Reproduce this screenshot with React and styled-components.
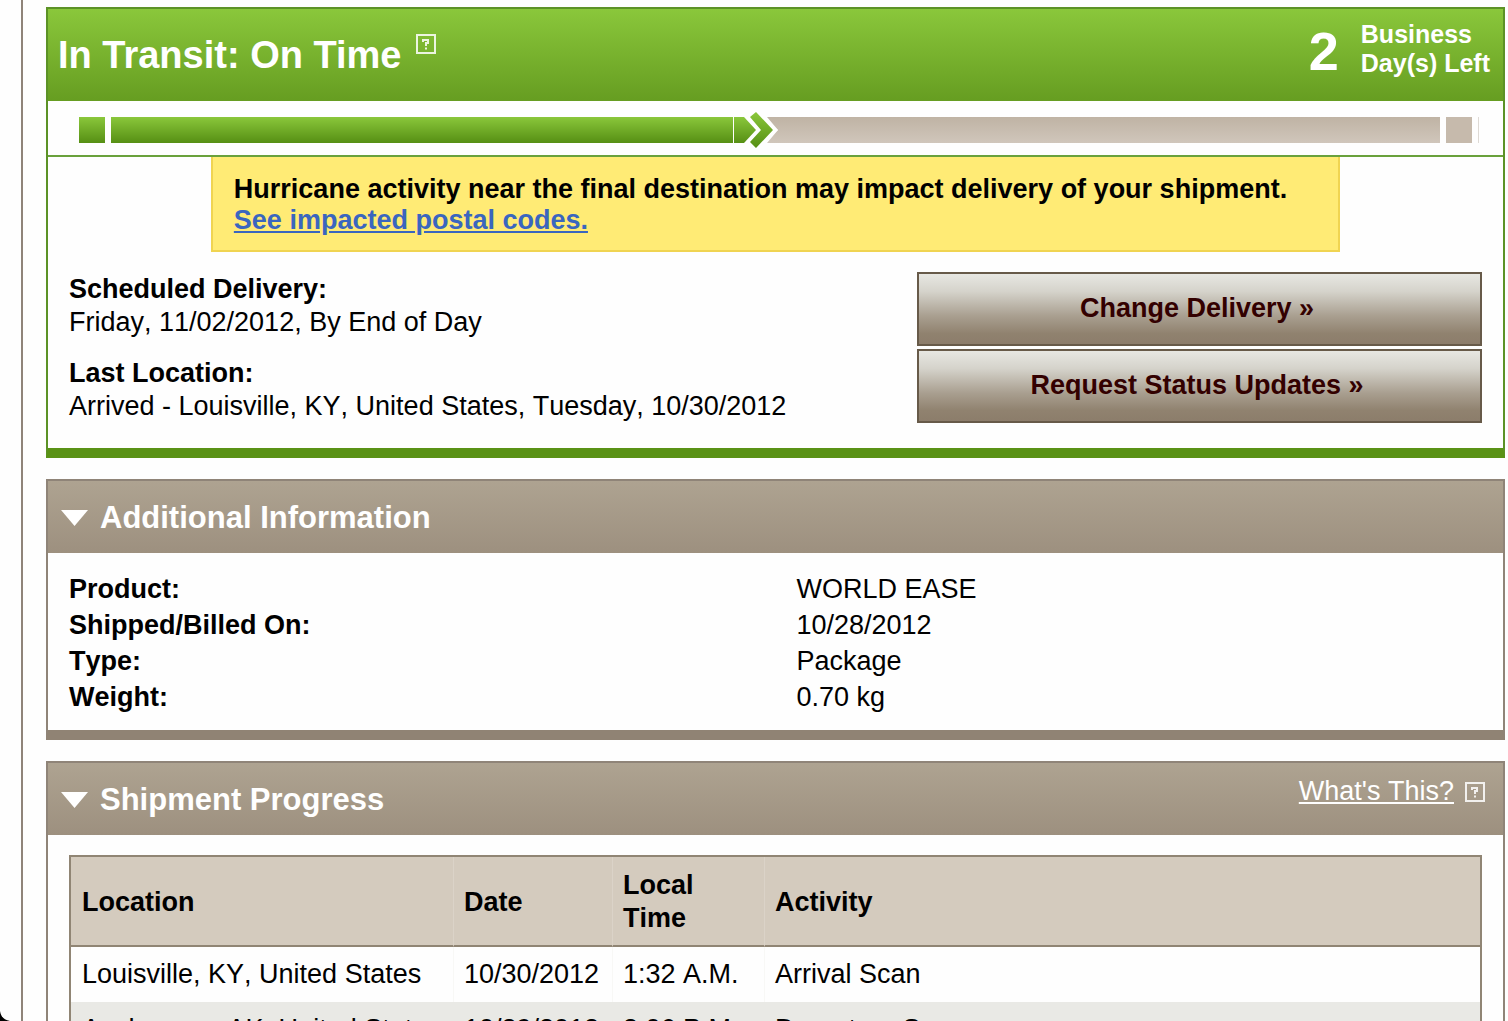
import React from "react";
import styled, { createGlobalStyle } from "styled-components";

const GlobalStyle = createGlobalStyle`
  *, *::before, *::after { box-sizing: border-box; }
  body {
    margin: 0;
    background: #fefefe;
    color: #000;
    font-family: "Liberation Sans", Arial, sans-serif;
    font-size: 27px;
    font-kerning: none;
    line-height: 33px;
  }
`;

const Page = styled.div`
  position: relative;
  height: 100vh;
  overflow: hidden;
  padding-left: 21px;
`;

const Content = styled.main`
  display: flex;
  flex-direction: column;
  gap: 21px;
  min-height: 100%;
  padding: 7px 3px 0 23px;
  border-left: 2px solid #8f8479;
`;

const WindowCorner = styled.svg`
  position: absolute;
  left: 0;
  bottom: 0;
`;

const Panel = styled.section`
  border: 2px solid ${(p) => (p.$tone === "green" ? "#5c9226" : "#8f8478")};
  border-bottom: 10px solid ${(p) => (p.$tone === "green" ? "#5a9216" : "#908374")};
`;

const StatusHeader = styled.header`
  display: flex;
  justify-content: space-between;
  height: 92px;
  padding: 11px 13px 0 10px;
  color: #fff;
  background: linear-gradient(#8ac73b, #669d21);
`;

const StatusTitle = styled.h1`
  display: flex;
  gap: 15px;
  margin: 0;
  font-size: 38px;
  font-kerning: normal;
  line-height: 70px;
`;

const HelpButton = styled.button`
  display: flex;
  align-self: flex-start;
  margin-top: ${(p) => p.$drop}px;
  padding: 0;
  border: 0;
  background: none;
`;

const DaysLeft = styled.div`
  display: flex;
  gap: 22px;
  font-size: 25px;
  font-weight: bold;
  line-height: 29px;
`;

const DayCount = styled.span`
  font-size: 54px;
  line-height: 62px;
`;

const Track = styled.div`
  display: flex;
  align-items: center;
  gap: 6px;
  height: 56px;
  padding: 4px 24px 0 31px;
  border-bottom: 2px solid #69a13c;
`;

const Stop = styled.span`
  width: 26px;
  height: 26px;
  background: ${(p) => (p.$done ? "linear-gradient(#8ac73b, #568f14)" : "#c6baac")};
`;

const EndTick = styled.span`
  width: 1px;
  height: 26px;
  background: #dedad5;
`;

const Bar = styled.div`
  display: flex;
  align-items: center;
  flex: 1;
`;

const Done = styled.span`
  height: 26px;
  background: linear-gradient(#8ac73b, #568f14);
`;

const Remaining = styled.span`
  flex: 1;
  height: 26px;
  background: linear-gradient(#bfb3a4, #d0c6bb);
`;

const Alert = styled.div`
  width: fit-content;
  margin: 0 auto;
  padding: 17px 51px 14px 21px;
  border: 2px solid #f0d451;
  border-top: 0;
  background: #ffeb75;
  font-weight: bold;
  line-height: 31px;

  p { margin: 0; }
  a { color: #3a66bf; }
`;

const StatusBody = styled.div`
  display: flex;
  justify-content: space-between;
  gap: 20px;
  padding: 20px 21px 25px;
`;

const Facts = styled.dl`
  margin: 0;
  padding-top: 1px;

  dt { font-weight: bold; }
  dd { margin: 0 0 18px; }
  dd:last-child { margin: 0; }
`;

const Actions = styled.div`
  display: flex;
  flex-direction: column;
  gap: 3px;
  width: 565px;
`;

const ActionButton = styled.button`
  height: 74px;
  padding: 0 5px 2px 0;
  border: 2px solid #675a49;
  background: linear-gradient(#e7e7e2, #d5d3cb 25%, #a99f90 60%, #90826f 85%, #8c7d6b);
  color: #300;
  font: bold 27px/33px "Liberation Sans", Arial, sans-serif;
  font-kerning: none;
`;

const SectionHeader = styled.header`
  display: flex;
  justify-content: space-between;
  height: 72px;
  padding: 0 18px 0 12px;
  color: #fff;
  background: linear-gradient(#aea391, #9d907f);
`;

const SectionTitle = styled.h2`
  margin: 0;
  font-size: 31px;
  line-height: 74px;
`;

const Toggle = styled.button`
  display: flex;
  align-items: center;
  gap: 11px;
  padding: 0;
  border: 0;
  background: none;
  color: inherit;
  font: inherit;
`;

const HeaderAside = styled.div`
  display: flex;
  gap: 11px;
  padding-top: 12px;

  a { color: #fff; }
`;

const Details = styled.dl`
  display: grid;
  grid-template-columns: 1fr 1fr;
  margin: 0;
  padding: 18px 0 15px;
  line-height: 36px;

  dt, dd { margin: 0; padding-left: 21px; }
  dt { font-weight: bold; }
`;

const TableWrap = styled.div`
  padding: 20px 21px;
`;

const ScanTable = styled.table`
  width: 100%;
  table-layout: fixed;
  border: 2px solid #908574;
  border-spacing: 0;

  th, td { text-align: left; vertical-align: middle; }
  th { padding: 12px 10px 10px; border-bottom: 2px solid #908574; background: #d4cbbe; }
  td { height: 55px; padding: 11px 10px; }
  th:first-child, td:first-child { padding-left: 11px; }
  th:not(:last-child) { border-right: 1px solid #dbd3c8; }
  td:not(:last-child) { border-right: 1px solid #f8f8f6; }
  tr:nth-child(even) td { border-color: #e9e9e5; background: #e9e9e5; }
`;

const Col = styled.col`
  width: ${(p) => p.$width};
`;

function HelpIcon() {
  return (
    <svg width="20" height="20" viewBox="0 0 20 20" fill="none" stroke="#fff" strokeOpacity="0.85" strokeWidth="2" aria-hidden="true">
      <rect x="1" y="1" width="18" height="18" />
      <path d="M6.500 6H12V9H10V12M10 13.500v2M7 5v3" />
    </svg>
  );
}

function Arrow() {
  return (
    <svg width="47" height="38" viewBox="0 0 47 38" aria-hidden="true">
      <defs>
        <linearGradient id="grass" x1="0" y1="0" x2="0" y2="1">
          <stop offset="0" stopColor="#8ac73b" />
          <stop offset="1" stopColor="#568f14" />
        </linearGradient>
        <linearGradient id="sand" x1="0" y1="0" x2="0" y2="1">
          <stop offset="0" stopColor="#bfb3a4" />
          <stop offset="1" stopColor="#d0c6bb" />
        </linearGradient>
      </defs>
      <path d="M34 6h13v26H34L45 19z" fill="url(#sand)" />
      <path d="M1 6h10l12 13-12 13H1z" fill="url(#grass)" />
      <path d="M17 6L23 0L45 19L23 38L17 32L27 19z" fill="#fff" />
      <path d="M17 6L23 1L40 19L23 37L17 31L28 19z" fill="url(#grass)" />
    </svg>
  );
}

function Triangle() {
  return (
    <svg width="29" height="16" viewBox="0 0 29 16" aria-hidden="true">
      <path d="M1 0h27L14.500 16z" fill="#fff" />
    </svg>
  );
}

const details = [
  ["Product:", "WORLD EASE"],
  ["Shipped/Billed On:", "10/28/2012"],
  ["Type:", "Package"],
  ["Weight:", "0.70 kg"],
];

const scans = [
  ["Louisville, KY, United States", "10/30/2012", "1:32 A.M.", "Arrival Scan"],
  ["Anchorage, AK, United States", "10/29/2012", "3:06 P.M.", "Departure Scan"],
];

function Section({ title, aside, children }) {
  return (
    <Panel>
      <SectionHeader>
        <SectionTitle>
          <Toggle type="button" aria-expanded="true">
            <Triangle />
            {title}
          </Toggle>
        </SectionTitle>
        {aside}
      </SectionHeader>
      {children}
    </Panel>
  );
}

export default function App() {
  const progress = 46.8;
  return (
    <Page>
      <GlobalStyle />
      <Content>
        <Panel $tone="green">
          <StatusHeader>
            <StatusTitle>
              In Transit: On Time
              <HelpButton type="button" aria-label="Help" $drop={14}>
                <HelpIcon />
              </HelpButton>
            </StatusTitle>
            <DaysLeft>
              <DayCount>2</DayCount>
              <span>Business<br />Day(s) Left</span>
            </DaysLeft>
          </StatusHeader>
          <Track>
            <Stop $done />
            <Bar>
              <Done style={{ width: `${progress}%` }} />
              <Arrow />
              <Remaining />
            </Bar>
            <Stop />
            <EndTick />
          </Track>
          <Alert role="alert">
            <p>Hurricane activity near the final destination may impact delivery of your shipment.</p>
            <a href="#postal-codes">See impacted postal codes.</a>
          </Alert>
          <StatusBody>
            <Facts>
              <dt>Scheduled Delivery:</dt>
              <dd>Friday, 11/02/2012, By End of Day</dd>
              <dt>Last Location:</dt>
              <dd>Arrived - Louisville, KY, United States, Tuesday, 10/30/2012</dd>
            </Facts>
            <Actions>
              <ActionButton type="button">Change Delivery »</ActionButton>
              <ActionButton type="button">Request Status Updates »</ActionButton>
            </Actions>
          </StatusBody>
        </Panel>

        <Section title="Additional Information">
          <Details>
            {details.map(([name, value]) => (
              <React.Fragment key={name}>
                <dt>{name}</dt>
                <dd>{value}</dd>
              </React.Fragment>
            ))}
          </Details>
        </Section>

        <Section
          title="Shipment Progress"
          aside={
            <HeaderAside>
              <a href="#whats-this">What's This?</a>
              <HelpButton type="button" aria-label="Help" $drop={7}>
                <HelpIcon />
              </HelpButton>
            </HeaderAside>
          }
        >
          <TableWrap>
            <ScanTable>
              <colgroup>
                <Col $width="383px" />
                <Col $width="159px" />
                <Col $width="152px" />
                <Col $width="auto" />
              </colgroup>
              <thead>
                <tr>
                  <th scope="col">Location</th>
                  <th scope="col">Date</th>
                  <th scope="col">Local<br />Time</th>
                  <th scope="col">Activity</th>
                </tr>
              </thead>
              <tbody>
                {scans.map((scan) => (
                  <tr key={scan[1]}>
                    {scan.map((cell) => (
                      <td key={cell}>{cell}</td>
                    ))}
                  </tr>
                ))}
              </tbody>
            </ScanTable>
          </TableWrap>
        </Section>
      </Content>
      <WindowCorner width="10" height="10" viewBox="0 0 10 10" aria-hidden="true">
        <path d="M0 0C1 6 4 9 10 10H0z" fill="#000" />
      </WindowCorner>
    </Page>
  );
}
